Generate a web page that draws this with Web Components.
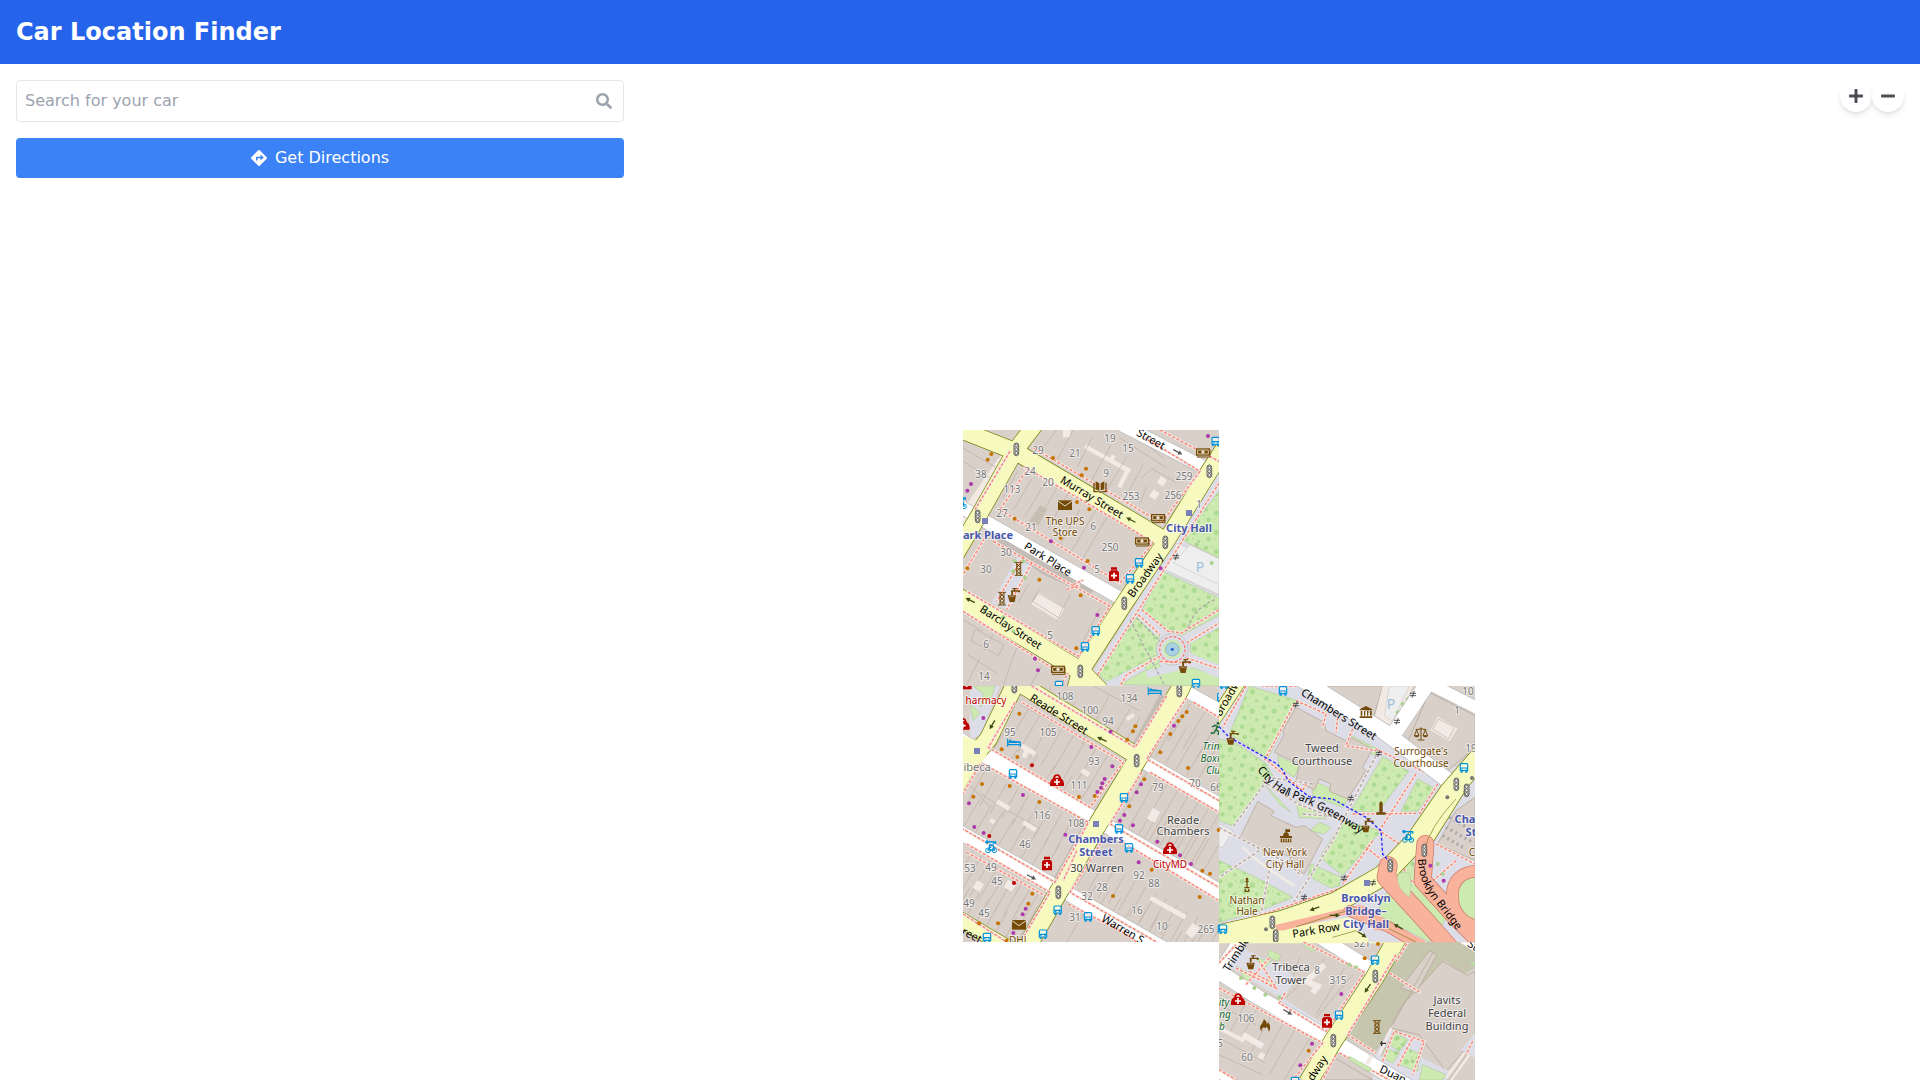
<!DOCTYPE html>
<html lang="en">
<head>
<meta charset="utf-8">
<meta name="viewport" content="width=device-width, initial-scale=1">
<title>Car Location Finder</title>
<style>
  html, body { margin: 0; height: 100%; }
  body { font: 16px/24px "DejaVu Sans", sans-serif; color: #000; background: #fff; }
</style>
</head>
<body>
<car-finder-app>
  <span slot="title">Car Location Finder</span>
  <search-panel slot="panel"></search-panel>
  <map-view slot="map"></map-view>
</car-finder-app>
<script>
const FA = {
  search: [512, 'M505 442.7L405.3 343c-4.5-4.5-10.6-7-17-7H372c27.6-35.3 44-79.7 44-128C416 93.1 322.9 0 208 0S0 93.1 0 208s93.1 208 208 208c48.3 0 92.7-16.4 128-44v16.3c0 6.4 2.5 12.5 7 17l99.7 99.7c9.4 9.4 24.6 9.4 33.9 0l28.3-28.3c9.4-9.4 9.4-24.6.1-34zM208 336c-70.7 0-128-57.2-128-128 0-70.7 57.2-128 128-128 70.7 0 128 57.2 128 128 0 70.7-57.2 128-128 128z'],
  directions: [512, 'M502.61 233.32L278.68 9.39c-12.52-12.52-32.83-12.52-45.36 0L9.39 233.32c-12.52 12.53-12.52 32.83 0 45.36l223.93 223.93c12.52 12.53 32.83 12.53 45.36 0l223.93-223.93c12.52-12.53 12.52-32.83 0-45.36zm-100.98 12.56l-84.21 77.73c-5.12 4.73-13.43 1.1-13.43-5.88V264h-96v64c0 4.42-3.58 8-8 8h-32c-4.42 0-8-3.58-8-8v-80c0-17.67 14.33-32 32-32h112v-53.73c0-6.97 8.3-10.61 13.43-5.88l84.21 77.73c3.43 3.17 3.43 8.59 0 11.76z'],
  plus: [448, 'M416 208H272V64c0-17.67-14.33-32-32-32h-32c-17.67 0-32 14.33-32 32v144H32c-17.67 0-32 14.33-32 32v32c0 17.67 14.33 32 32 32h144v144c0 17.67 14.33 32 32 32h32c17.67 0 32-14.33 32-32V304h144c17.67 0 32-14.33 32-32v-32c0-17.67-14.33-32-32-32z'],
  minus: [448, 'M416 208H32c-17.67 0-32 14.33-32 32v32c0 17.67 14.33 32 32 32h384c17.67 0 32-14.33 32-32v-32c0-17.67-14.33-32-32-32z']
};

customElements.define('fa-icon', class extends HTMLElement {
  connectedCallback() {
    const [w, d] = FA[this.getAttribute('name')];
    this.attachShadow({ mode: 'open' }).innerHTML = `
      <style>:host{display:inline-block;height:16px;line-height:0}svg{height:16px;display:block;fill:currentColor}</style>
      <svg viewBox="0 0 ${w} 512" width="${w / 32}" height="16" aria-hidden="true"><path d="${d}"/></svg>`;
  }
});

customElements.define('car-finder-app', class extends HTMLElement {
  connectedCallback() {
    this.attachShadow({ mode: 'open' }).innerHTML = `
      <style>
        :host{display:flex;flex-direction:column;height:100vh}
        header{background:#2563eb;color:#fff;padding:16px}
        h1{margin:0;font-size:24px;line-height:32px;font-weight:700}
        main{display:grid;grid-template-columns:minmax(0,1fr) minmax(0,2fr);grid-template-rows:minmax(0,1fr);flex:1;min-height:0}
        aside{padding:16px}
        section{display:flex}
      </style>
      <header><h1><slot name="title"></slot></h1></header>
      <main><aside><slot name="panel"></slot></aside><section><slot name="map"></slot></section></main>`;
  }
});

customElements.define('search-panel', class extends HTMLElement {
  connectedCallback() {
    this.attachShadow({ mode: 'open' }).innerHTML = `
      <style>
        :host{display:flex;flex-direction:column;gap:16px}
        label{display:flex;align-items:center;border:1px solid #e5e7eb;border-radius:4px;padding:8px;color:#9ca3af}
        input{flex:1;min-width:0;border:0;padding:0;margin:0;outline:0;background:none;font:inherit;height:24px;color:#000}
        input::placeholder{color:#9ca3af;opacity:1}
        label fa-icon{margin:0 3px}
        button{display:flex;justify-content:center;align-items:center;gap:8px;border:0;border-radius:4px;padding:8px 16px;background:#3b82f6;color:#fff;font:inherit;cursor:pointer}
      </style>
      <label><input type="text" placeholder="Search for your car" aria-label="Search for your car"><fa-icon name="search"></fa-icon></label>
      <button type="button"><fa-icon name="directions"></fa-icon><span>Get Directions</span></button>`;
  }
});

customElements.define('map-view', class extends HTMLElement {
  connectedCallback() {
    this.attachShadow({ mode: 'open' }).innerHTML = `
      <style>
        :host{display:block;flex:1;position:relative;overflow:hidden}
        .pane{position:absolute;left:calc(50% - 317px);top:366px;display:grid;grid-template-columns:256px 256px;grid-auto-rows:256px}
        .a{grid-area:1/1}.b{grid-area:2/1}.c{grid-area:2/2}.d{grid-area:3/2}
        .controls{position:absolute;top:16px;right:16px;display:flex}
        button{width:32px;height:32px;padding:0;border:0;border-radius:16px;background:#fff;color:#4b4f55;display:flex;align-items:center;justify-content:center;box-shadow:0 4px 6px -1px rgba(0,0,0,.1),0 2px 4px -1px rgba(0,0,0,.06);cursor:pointer}
      </style>
      <div class="pane">
        <map-tile class="a" name="cityHall"></map-tile><map-tile class="b" name="chambers"></map-tile>
        <map-tile class="c" name="park"></map-tile><map-tile class="d" name="federal"></map-tile>
      </div>
      <div class="controls">
        <button type="button" aria-label="Zoom in"><fa-icon name="plus"></fa-icon></button>
        <button type="button" aria-label="Zoom out"><fa-icon name="minus"></fa-icon></button>
      </div>`;
  }
});

/* ---- Map drawing helpers. Geometry is on a 3-units-per-pixel grid. ---- */
const P = (cls, d, w) => `<path class="${cls}" d="${d}"${w ? ` stroke-width="${w}"` : ''}/>`;
const roads = (kind, list) =>
  list.map(([d, w]) => P(kind + 'c', d, w + 4)).join('') + list.map(([d, w]) => P(kind, d, w)).join('');
const foot = (...ds) => ds.map(d => P('fw', d)).join('') + ds.map(d => P('ff', d)).join('');
const grey = (...ds) => ds.map(d => P('fw', d)).join('') + ds.map(d => P('fg', d)).join('');
const poly = (cls, ...ds) => ds.map(d => `<polygon class="${cls}" points="${d}"/>`).join('');
const lots = (x1, y1, x2, y2, n, dx, dy) => {
  let d = '';
  for (let i = 0; i < n; i++) {
    const t = n > 1 ? i / (n - 1) : 0, x = x1 + (x2 - x1) * t, y = y1 + (y2 - y1) * t;
    d += `M${x.toFixed(1)} ${y.toFixed(1)}l${dx} ${dy}`;
  }
  return P('lot', d);
};
const dots = (c, ...xy) => {
  let s = '';
  for (let i = 0; i < xy.length; i += 2) s += `<circle cx="${xy[i]}" cy="${xy[i + 1]}" r="6" fill="${c}"/>`;
  return s;
};
const ORANGE = '#c77400', PURPLE = '#ac39ac', RED = '#bf0000';
const BR = '#734a08', BL = '#0092da';
const ICON = {
  sig: '<rect x="-7" y="-19" width="14" height="38" rx="7" fill="#f4f4ee" stroke="#444" stroke-width="2.500"/><g fill="none" stroke="#444" stroke-width="2.500"><circle cy="-11" r="4.500"/><circle r="4.500"/><circle cy="11" r="4.500"/></g>',
  bus: `<path fill="#fff" fill-opacity=".6" stroke="${BL}" stroke-width="3.500" d="M-8-12H8Q11-12 11-9V9H-11V-9Q-11-12-8-12ZM-11 1H11"/><path fill="${BL}" d="M-10 8h6v7h-6zM4 8h6v7H4zM-8 3h4v3h-4zM4 3h4v3H4z"/>`,
  cash: `<rect x="-21" y="-13" width="42" height="22" fill="${BR}"/><path d="M-16-8H16V4H-16Z" fill="none" stroke="#eee3d0" stroke-width="2.500"/><circle cy="-2" r="5" fill="#eee3d0"/><path d="M-18 13H21V-8" fill="none" stroke="${BR}" stroke-width="3"/>`,
  mail: `<path fill="${BR}" d="M-21-14H21V15H-21Z"/><path d="M-21-12L0 3 21-12" fill="none" stroke="#e8dccd" stroke-width="3"/>`,
  book: `<path fill="${BR}" d="M-20-13h4v24l16 3 16-3v-24h4v29H3l-3 2-3-2H-20ZM-13-17L-2-11V10L-13 7ZM13-17L2-11V10L13 7Z"/>`,
  rx: `<path fill="${RED}" d="M-9-21H9v7H-9ZM-8-12H8Q15-10 15-4V20H-15V-4Q-15-10-8-12Z"/><path d="M0-5V13M-9 4H9" stroke="#fff" stroke-width="5"/>`,
  doc: `<path fill="${RED}" d="M-12-6Q-10-18 0-18T12-6Q20-2 21 9V17H-21V9Q-20-2-12-6Z"/><path d="M-6-8Q-4-13 0-13T6-8Z" fill="#fff"/><path d="M0-4V14M-9 5H9" stroke="#fff" stroke-width="5"/>`,
  drink: `<path fill="${BR}" d="M-14 0H11L7 20H-8ZM-4-15H4v-4H0v-3H14v3H9v4h14v6H17v-2H2V-1H-3Z"/><path d="M-9 4H6" stroke="#c8b797" stroke-width="2"/>`,
  glass: `<path fill="none" stroke="${BR}" stroke-width="3" d="M-12-19H12M-12 19H12M-6-18V18M6-18V18M-6-16L6-5-6 6 6 17M6-16L-6-5 6 6-6 17"/>`,
  sq: '<rect x="-9" y="-9" width="18" height="18" fill="#7981b8"/>',
  bed: `<path fill="none" stroke="${BL}" stroke-width="3.500" d="M-19-12V12M-19 6H19M19 12V-2L-10-5M-19-1H19"/><circle cx="-12" cy="-5" r="4" fill="${BL}"/>`,
  bike: `<path fill="none" stroke="${BL}" stroke-width="4" d="M-16-12H16M8-12v6M14-12v6M-4-3H6L10 12H-6ZM-10 12L0 2"/><g fill="none" stroke="${BL}" stroke-width="3"><circle cx="-9" cy="13" r="7"/><circle cx="10" cy="13" r="7"/><circle cx="-12" cy="-12" r="4"/></g>`,
  gate: '<path d="M-9-3H9M-9 4H9M-3 10L4-10" stroke="#333" stroke-width="2.500"/>',
  museum: `<path fill="${BR}" d="M-19-8L0-18 19-8V-5H-19ZM-16-3h5v14h-5zM-6-3h4v14h-4zM3-3h4v14H3zM12-3h5v14h-5zM-19 13H19v5H-19Z"/>`,
  scales: `<path fill="none" stroke="${BR}" stroke-width="3" d="M0-20V17M-10 18H10M-16-13Q0-18 16-13M-13-12L-20 5H-6ZM13-12L6 5H20Z"/><path fill="${BR}" d="M-21 5H-5Q-13 15-21 5ZM5 5H21Q13 15 5 5Z"/>`,
  hall: `<path fill="${BR}" d="M-18-2H-9Q-8-12 0-13T9-2H18V4H-18ZM-16 6H16V17H-16ZM-2-22H12v8H1v3H-2Z"/><path d="M-10 7V15M-3 7V15M4 7V15M11 7V15" stroke="#e2d7c8" stroke-width="3"/>`,
  tower: `<path fill="${BR}" d="M0-22L5-16V12H14V19H-14V12H-5V-16Z"/>`,
  statue: `<circle cy="-17" r="4" fill="${BR}"/><path d="M0-14V8M-5-10H5M-8 9H8M-5 13V20H5V13" fill="none" stroke="${BR}" stroke-width="4"/>`,
  fire: `<path fill="${BR}" d="M-10 18Q-20 6-10-5Q-6-11-3-20Q6-13 5-4Q9-6 9-12Q21 5 11 18Q12 9 4 3Q1 10-3 5Q-12 9-10 18Z"/>`,
  run: '<circle cx="6" cy="-17" r="4" fill="#156c32"/><path d="M-12-6L-4-11 4-8 0 2 8 8 6 18M0 2L-6 12H-16M4-7L13-2" fill="none" stroke="#156c32" stroke-width="4"/>',
  arr: '<path d="M-15 0H5" stroke="#3d4b12" stroke-width="4"/><path d="M3-7L16 0 3 7Z" fill="#3d4b12"/>',
  arw: '<path d="M-15 0H5" stroke="#555" stroke-width="4"/><path d="M3-7L16 0 3 7Z" fill="#555"/>'
};
const pins = (name, ...xy) => {
  let s = '';
  for (let i = 0; i < xy.length; i += 2) s += `<g transform="translate(${xy[i]} ${xy[i + 1]})">${ICON[name]}</g>`;
  return s;
};
const arrow = (name, x, y, r) => `<g transform="translate(${x} ${y}) rotate(${r})">${ICON[name]}</g>`;

const TILES = {
  cityHall: {
    shapes: () =>
      poly('pale', '9,220 140,60 60,300 9,290') + poly('bld', '9,60 130,68 9,245') +
      P('slot', 'M375 55l135 75M450 100l12-18M506 120l-28 58', 13) + P('slot', 'M320 6v22M612 150l-12 20M590 190l-14 20', 22) +
      P('slot', 'M225 510l82 50', 42) + P('lotp', 'M218 520l18-24 80 46-16 30z') + P('lotp', 'M46 603l85 47-15 33-84-46z') +
      P('lot', 'M240 70L290 6M290 98l50-92M352 118l45-92M392 162l60-110M440 186l60-100M500 200l50-90M545 150l30-28 75 42M560 175l-20 50M9 100l80 50M510 6l100 85M480 30l140 90M9 60l110 65') +
      P('lot', 'M128 210l45-80M160 245l55-92M195 265l55-92M230 285l60-105M265 300l60-105M300 350l60-105M335 370l75-128M370 390l80-140M205 470l-30 52M240 480l-25 42M330 500l-40 80M420 540l-55 110M9 575l60 35M170 660l-40 110M100 620l-30 50M245 715l-40 70M60 690l-40 80M22 680l90 55') +
      P('pale', 'M85 275L470 482 462 497 75 298Z') + poly('court', '175,380 222,405 145,545 95,525') +
      poly('hat', '110,320 135,330 400,488 390,502 250,440 115,345') +
      poly('dk', '240,232 262,243 236,292 208,280') +
      poly('ped', '777,130 777,210 420,774 380,774 400,730') +
      poly('pale2', '650,345 777,402 777,500 615,425') + poly('lotgrey', '690,350 777,392 777,470 640,405') +
      poly('ped', '610,425 777,505 777,774 400,774 420,725') +
      poly('grass', '777,190 777,390 665,335', '608,430 777,510 777,562 665,622 625,615 545,548', '535,562 598,622 594,680 440,762 412,735', '777,600 777,712 695,692 690,645', '480,770 595,705 610,730 660,708 777,745 777,774') +
      poly('trees', '608,430 777,510 777,562 665,622 625,615 545,548', '777,190 777,390 665,335', '535,562 598,622 594,680 440,762 412,735', '777,600 777,712 695,692 690,645') +
      P('park', 'M595 615L540 560M680 640L777 585M685 685L777 722M600 690L440 774M560 740L700 705L777 740', 22) +
      `<circle cx="637" cy="664" r="48" fill="#dddde8" stroke="#bbb" stroke-width="2"/><circle cx="637" cy="664" r="29" fill="#cdebb0"/>` +
      poly('grass', '545,700 585,682 600,700 560,728') +
      foot('M777 165L400 760', 'M535 560L600 620M545 545L625 610L665 615L777 545M680 645L777 585M680 690L777 722M600 685L500 740L480 774M600 700L690 705') +
      `<circle cx="637" cy="664" r="38" class="ff"/><circle cx="637" cy="664" r="20" fill="#aad3df" stroke="#8ab4cf" stroke-width="3"/><circle cx="637" cy="664" r="5" fill="#36c"/>` +
      P('fg', 'M510 575L615 774M530 570L600 640M765 515Q700 540 680 610') +
      roads('w', [['M-5 232L75 280L485 513', 38], ['M480 -12L740 122', 38]]) +
      roads('y', [['M-5 508L360 728L420 790', 54], ['M0 5L165 70L612 335', 50], ['M240 -30L168 65L55 265L-10 375', 48], ['M345 790L361 730L493 526L616 343L748 130L800 50', 50]]) +
      P('y', 'M-5 508L360 728L420 790', 54) +
      foot('M205 120L120 245L480 465L575 350', 'M190 115L500 295L580 345', 'M220 60L605 285L720 130L555 30', 'M150 70L45 245', 'M80 320L9 440M100 340L450 535L355 685L20 490', 'M190 385L110 520M215 405L140 545', 'M9 550L290 728', 'M600 6L777 100', 'M300 774L325 735', 'M340 470l30-14M320 485l40-14') +
      dots('#a9d28f', 190, 400, 160, 430, 195, 450, 165, 400, 130, 568, 75, 548, 160, 610, 710, 350, 755, 405) +
      dots(ORANGE, 94, 78, 83, 95, 279, 90, 378, 122, 365, 142, 351, 222, 388, 244, 164, 272, 302, 330, 383, 399, 22, 421, 238, 455, 362, 502, 349, 661) +
      dots(PURPLE, 33, 168, 22, 188, 273, 340, 372, 419, 412, 561, 225, 692, 234, 727, 602, 421, 744, 24) +
      pins('sig', 169, 64, 53, 265, 748, 130, 616, 343, 493, 526, 361, 730) + pins('bus', 767, 40, 537, 404, 510, 452, 407, 608, 375, 656, 297, 772, 708, 766) + pins('bike', 2, 222) +
      pins('cash', 729, 74, 594, 271, 546, 341, 294, 726) + pins('mail', 315, 231) + pins('book', 420, 177) + pins('rx', 462, 439) +
      pins('drink', 157, 502, 670, 715) + pins('glass', 176, 423, 126, 512) + pins('sq', 75, 279, 687, 255) + pins('gate', 648, 386) +
      arrow('arr', 513, 276, 207) + arrow('arr', 31, 517, 207) + arrow('arw', 653, 72, 28),
    labels: [
      ['Murray Street', 395, 207, 'st', 31], ['Park Place', 264, 393, 'st', 32], ['Barclay Street', 153, 597, 'st', 33], ['Broadway', 554, 442, 'st', -54], ['Street', 572, 32, 'st', 29],
      ['19', 449, 29, 'no'], ['15', 505, 59, 'no'], ['29', 235, 65, 'no'], ['21', 346, 76, 'no'], ['24', 210, 130, 'no'], ['38', 63, 137, 'no'], ['20', 263, 163, 'no'], ['9', 437, 135, 'no'], ['259', 673, 145, 'no'], ['113', 155, 184, 'no'], ['253', 514, 205, 'no'], ['256', 640, 200, 'no'], ['1', 716, 227, 'no'], ['27', 127, 254, 'no'], ['21', 212, 298, 'no'], ['6', 398, 293, 'no'], ['250', 451, 357, 'no'], ['30', 138, 373, 'no'], ['30', 79, 423, 'no'], ['5', 412, 424, 'no'], ['5', 269, 622, 'no'], ['6', 79, 648, 'no'], ['14', 71, 743, 'no'],
      ['The UPS', 315, 278, 'br'], ['Store', 315, 313, 'br'], ['City Hall', 686, 299, 'sn'], ['ark Place', 85, 320, 'sn'], ['P', 720, 420, 'pk']
    ]
  },
  chambers: {
    shapes: () =>
      poly('ped', '30,6 120,6 60,155 30,165') + poly('grass', '40,6 105,6 95,40 60,70 70,30', '30,60 60,85 40,110') +
      P('lot', 'M205 6l-15 30M240 6l-22 45M275 6l-32 56M310 35l-38 65M345 55l-32 58M380 75l-42 70M405 110l-40 70M450 30l-70 130M510 75l-70 120M540 100l-65 110M400 6l140 75M180 60l70 40M9 280L90 370M60 330l180 105M50 215l120 70') +
      lots(205, 75, 445, 210, 8, -65, 110) + lots(130, 150, 390, 305, 6, -35, 55) +
      lots(75, 260, 370, 425, 10, -50, 90) + lots(60, 345, 300, 480, 8, -50, 85) + lots(40, 500, 240, 620, 9, -60, 105) + lots(30, 610, 170, 700, 6, -50, 90) +
      lots(560, 265, 777, 390, 8, -85, 150) + lots(600, 380, 777, 480, 7, -60, 105) + lots(370, 500, 777, 735, 14, -50, 88) + lots(410, 600, 777, 800, 11, -50, 85) +
      lots(650, 110, 777, 180, 5, -65, 110) + lots(690, 60, 777, 110, 3, -65, 110) + P('lot', 'M310 650L240 774M370 690L320 774M340 500L230 680') +
      P('slot', 'M185 185l40 25M200 200l-8 20M110 352l38 22M190 415l38 23M100 405l-6 12M572 642l105 58', 14) + P('slot', 'M590 378l-18 32M380 260l-8 12M708 725l-22 30M508 94l6 10M45 600l20 12M138 598l24 14', 26) +
      poly('hat', '600,30 625,45 530,200 512,190', '340,480 355,500 240,650 190,774 170,774 270,600') +
      roads('w', [['M-5 165L50 200L410 408L800 635', 44], ['M530 220L800 375', 42], ['M-10 440L300 615L640 810', 42], ['M640 0L800 90', 36]]) +
      roads('y', [['M175 -20L85 165L30 230L-20 320', 52], ['M165 -10L530 215L545 235', 50], ['M690 -50L658 20L530 230L408 430L295 625L200 790', 54], ['M-10 700L90 760L160 800', 44]]) +
      P('y', 'M9 155L50 170 90 130 80 215 9 310Z') +
      foot('M165 55L85 190L390 370L490 235L185 55', 'M215 6L525 190L620 35', 'M680 40L560 225L777 350', 'M700 55L777 100', 'M545 265L450 420L777 610', 'M570 265L777 385', 'M70 240L385 415L285 595L9 435', 'M60 240L9 330', 'M20 480L270 625L190 760', 'M20 505L255 635', 'M430 465L330 625L600 780', 'M350 500L310 590', 'M480 470L777 650', 'M9 690L140 774', 'M325 660L480 740L530 774') +
      dots(ORANGE, 178, 89, 526, 127, 519, 142, 502, 167, 655, 111, 667, 97, 680, 84, 631, 150, 601, 205, 684, 252, 125, 196, 172, 219, 404, 336, 357, 339, 66, 300, 149, 306, 40, 338, 238, 354, 553, 286, 508, 367, 575, 557, 727, 560, 750, 569, 719, 639, 459, 636, 217, 629, 205, 659, 57, 718, 114, 718, 140, 770, 776, 438) +
      dots(PURPLE, 70, 102, 452, 143, 394, 189, 457, 247, 434, 285, 427, 298, 423, 311, 412, 324, 642, 125, 543, 301, 530, 325, 493, 393, 480, 410, 519, 424, 189, 333, 27, 358, 43, 429, 71, 447, 316, 452, 592, 473, 660, 514, 693, 540, 536, 535, 197, 674, 188, 691, 160, 747) +
      dots(RED, 216, 244, 88, 456, 162, 597) +
      pins('sig', 163, 8, 658, 20, 530, 230, 295, 625) + pins('bus', 159, 269, 492, 341, 477, 434, 507, 491, 293, 678, 384, 698, 249, 750, 81, 760, 708, -4, 784, 40, 786, 735) +
      pins('bed', 162, 176, 584, 22) + pins('doc', 291, 289, 630, 493, 8, 120) + pins('rx', 261, 539, 20, -4) + pins('mail', 177, 722) + pins('bike', 93, 486) +
      pins('sq', 51, 201, 408, 420) + pins('run', 768, 135) + arrow('arr', 97, 122, 120) + arrow('arr', 426, 166, 205) + arrow('arw', 214, 579, 27),
    labels: [
      ['Reade Street', 297, 91, 'st', 32], ['Warren S', 490, 735, 'st', 30], ['reet', 35, 752, 'st', 28],
      ['108', 315, 35, 'no'], ['134', 508, 41, 'no'], ['100', 390, 79, 'no'], ['94', 444, 112, 'no'], ['95', 149, 144, 'no'], ['105', 263, 143, 'no'], ['93', 402, 230, 'no'], ['111', 357, 302, 'no'], ['116', 245, 394, 'no'], ['108', 347, 416, 'no'], ['46', 195, 479, 'no'], ['53', 31, 552, 'no'], ['49', 93, 548, 'no'], ['45', 111, 592, 'no'], ['49', 27, 658, 'no'], ['45', 73, 686, 'no'], ['79', 594, 308, 'no'], ['70', 705, 298, 'no'], ['66', 769, 308, 'no'], ['92', 538, 572, 'no'], ['88', 582, 597, 'no'], ['28', 427, 610, 'no'], ['32', 382, 635, 'no'], ['16', 531, 678, 'no'], ['31', 344, 699, 'no'], ['10', 605, 727, 'no'], ['265', 737, 735, 'no'],
      ['harmacy', 78, 47, 'rd'], ['CityMD', 630, 541, 'rd'], ['ibeca', 52, 250, 'gy'], ['Reade', 668, 408, 'bn'], ['Chambers', 668, 441, 'bn'], ['30 Warren', 410, 552, 'bn'],
      ['Chambers', 409, 464, 'sn'], ['Street', 409, 503, 'sn'], ['DHL', 177, 768, 'br'], ['Trin', 752, 187, 'gn'], ['Boxi', 750, 222, 'gn'], ['Clu', 758, 257, 'gn']
    ]
  },
  park: {
    shapes: () =>
      poly('ped', '9,6 260,6 777,280 777,774 9,774') +
      poly('grass', '100,6 245,50 155,225 40,150', '9,165 60,178 150,238 170,275 50,425 9,410',
        '185,215 250,245 235,280 190,250', '290,290 360,320 400,340 380,370 290,335', '500,218 578,262 485,385 405,380', '605,285 655,312 605,382 555,382',
        '405,155 485,195 480,215 400,180', '380,410 495,440 380,575 312,520', '285,540 375,580 370,605 345,612 275,575', '9,530 120,580 230,640 120,685 9,715', '145,300 225,385 190,360', '240,350 330,405 250,400', '310,415 345,430 325,450 282,440', '540,570 590,520 600,600 700,690 640,774 480,690', '720,620 777,560 777,774 730,740') +
      poly('trees', '100,6 245,50 155,225 40,150', '9,165 60,178 150,238 170,275 50,425 9,410', '500,218 578,262 485,385 405,380', '605,285 655,312 605,382 555,382', '380,410 495,440 380,575 312,520', '285,540 375,580 370,605 345,612 275,575', '9,530 120,580 230,640 120,685 9,715') +
      poly('bldl', '240,70 325,115 330,140 400,175 405,160 470,195 440,250 450,260 395,345 340,322 345,300 310,285 295,318 240,290 250,240 175,205 205,150 200,140', '125,352 175,382 165,395 240,430 265,425 320,465 265,570 215,545 225,520 150,490 140,500 70,465') +
      poly('bldl', '640,25 777,95 777,190 690,265 570,185', '290,6 500,6 470,110 350,50') + poly('pale', '500,6 590,6 540,130 475,105') + poly('lotgrey', '520,6 580,6 530,112 505,95') +
      P('slot', 'M655 118l58 34', 46) + P('lotp', 'M650 135l18-30 48 24-18 36z') +
      poly('bldl', '720,380 777,340 777,530 665,480') + P('hats', 'M700 400l70 40M690 430l80 45M680 455l70 40') +
      P('slot', 'M80 490Q130 540 235 605', 8) + P('slot', 'M9 440L36 455 9 480', 14) +
      P('lotgrey', 'M9 420L50 440 20 490H9Z') +
      grey('M480 215L350 470L230 660', 'M9 430L220 540L255 575', 'M130 500L9 580', 'M160 560L135 690', 'M140 290L245 360L380 410', 'M290 300L160 280L50 430', 'M260 390L380 400') +
      foot('M235 60L145 230', 'M270 6L140 6', 'M90 6L20 130', 'M480 195L700 300', 'M410 390L600 388', 'M600 270L490 440L550 480', 'M470 470L380 600M450 490L500 530L600 600', 'M9 730L160 685L380 610L480 560', 'M240 50L330 90L320 130M365 100L360 145M410 135L390 185L480 200', 'M155 230L260 320L270 300', 'M665 300L610 390', 'M660 480L777 540M720 530L640 600M560 540L590 640') +
      dots('#a9d28f', 560, 60, 575, 45, 545, 85, 590, 540, 610, 560, 665, 540, 680, 570, 650, 630, 690, 640, 560, 610, 620, 500) +
      roads('w', [['M255 -15L500 140L710 300', 46], ['M640 -10L520 170', 46], ['M620 -10L800 80', 36]]) +
      roads('y', [['M-10 115L80 -20', 36], ['M-20 760L200 710L360 655L500 575L600 470L700 325L800 210', 60], ['M720 310L620 470', 56]]) +
      P('y', 'M9 774L200 735 400 700 460 774Z') +
      P('tr', 'M180 732L430 672L480 730L500 730', 18) + P('y', 'M330 740Q400 725 430 760L450 774M250 750l120-10', 24) +
      roads('t', [['M517 545L510 580L620 700L700 790', 52], ['M628 480L620 590L720 700L790 770', 50], ['M800 560Q700 560 710 650Q720 720 800 730', 34], ['M400 680L520 730L620 790', 30]]) +
      P('t', 'M200 733L440 672 530 730 620 774', 14) + P('olv', 'M240 728L420 672M460 705L600 774M625 500Q640 430 720 345M350 760l70-20 30 20') +
      P('grass', 'M545 575Q560 555 580 570Q590 600 580 640Q540 610 545 575Z') +
      P('path', 'M9 128L40 160L165 230Q200 245 215 290L280 338L350 345L450 400L495 440L500 510L530 545') +
      dots('#777', 694, 340, 768, 282, 150, 736) + dots(PURPLE, 643, 545, 683, 590) + dots(ORANGE, 6, 438) +
      pins('sig', 721, 301, 752, 319, 625, 499, 523, 545, 169, 715, 179, 756) + pins('bus', 201, 20, 744, 251, 21, 735, 24, 0) +
      pins('gate', 240, 61, 591, 31, 543, 112, 488, 208, 404, 343, 384, 582, 471, 596, 264, 640) + pins('museum', 450, 84) + pins('scales', 615, 150) +
      pins('drink', 45, 162, 450, 425) + pins('tower', 495, 373) + pins('hall', 210, 458) + pins('statue', 93, 602) + pins('bike', 576, 455) + pins('sq', 453, 597) +
      arrow('arr', 296, 674, 160) + arrow('arr', 356, 694, 0) + arrow('arr', 547, 728, 210) + arrow('arr', 438, 751, 35) + pins('run', -2, 130),
    curves: [
      ['greenway', 'City Hall Park Greenway', 'M38 84Q52 102 68 110Q98 119 150 153'],
      ['bridge', 'Brooklyn Bridge', 'M199 173Q200 196 212 211L252 263']
    ],
    labels: [
      ['Chambers Street', 370, 90, 'st', 32], ['Park Row', 299, 737, 'st', -9], ['Broadw', 34, 42, 'st', -60],
      ['10', 757, 22, 'no'], ['1', 724, 79, 'no'], ['19', 766, 192, 'no'], ['P', 525, 64, 'pk'],
      ['Tweed', 319, 193, 'bn'], ['Courthouse', 319, 231, 'bn'], ["Surrogate's", 615, 202, 'br'], ['Courthouse', 615, 236, 'br'],
      ['New York', 208, 505, 'br'], ['City Hall', 208, 540, 'br'], ['Nathan', 93, 647, 'br'], ['Hale', 93, 682, 'br'],
      ['Brooklyn', 451, 643, 'sn'], ['Bridge–', 451, 682, 'sn'], ['City Hall', 451, 720, 'sn'], ['Cha', 748, 405, 'sn'], ['St', 765, 443, 'sn'], ['C', 768, 505, 'br']
    ]
  },
  federal: {
    shapes: () =>
      poly('khaki', '580,6 777,6 777,90 740,110 690,70 640,140 560,270 500,350 395,300 500,130') +
      poly('bldl', '680,70 755,112 777,100 777,300 690,400 610,290 520,270 560,200', '640,38 662,50 600,165 555,150') + P('bldl', 'M650 45L530 260', 24) +
      poly('ped', '200,90 60,20 30,80 200,185 240,120') +
      poly('grass', '160,35 195,52 185,70 155,55', '120,60 165,70 140,95', '60,85 110,110 95,135', '250,12 300,35 285,40', '150,120 180,135 165,150') +
      P('lot', 'M330 60L210 180M385 90L300 230M250 60l-20 60M410 110l-110 130M9 200l110 60M130 200L75 300M170 225l-65 120M205 250l-60 110M240 270l-80 140M285 295l-80 130M9 300l140 75M9 350l130 60M100 175l-60 110M340 350l-60 100') +
      P('slot', 'M325 80L270 130L305 145L290 165M80 290l60 35M130 350l14 8', 18) + P('slot', 'M9 270l75 38', 12) +
      poly('ped', '440,110 455,118 335,290 190,190 200,180 330,262', '520,270 620,310 600,350 700,400 690,426 470,426 480,340', '777,285 777,360 735,335') +
      poly('grass', '530,280 575,305 550,340 520,320', '505,330 550,345 530,375 500,360', '575,330 612,350 605,400 550,380', '620,380 690,410 680,426 610,426', '755,65 777,75 777,85') + poly('trees', '530,280 575,305 550,340 520,320', '575,330 612,350 605,400 550,380') +
      P('slot', 'M525 270L490 350M760 350L705 426M745 345L690 420', 8) + P('lot', 'M520 270L480 345M535 275L495 355M755 345L700 426') +
      poly('bldl', '340,350 470,426 320,426') +
      roads('w', [['M-10 90L130 180L345 305L500 400L600 460', 44], ['M300 -10L460 90', 40], ['M-10 130L80 -10', 34], ['M-20 390L80 450', 26], ['M740 0L800 40', 30]]) +
      roads('y', [['M555 -20L478 115L352 308L275 435', 54]]) + P('y', 'M9 6H540L520 16H9Z') + P('t', 'M490 8H777', 10) +
      foot('M440 110L330 280L190 195L210 160', 'M540 50L395 290L480 345', 'M580 6L540 70M520 105L615 165', 'M9 150L320 315L230 426', 'M370 345L520 426M360 350L320 426', 'M250 6L450 105', 'M9 75L60 20M60 90L180 150L130 70M90 140L160 60M100 100L160 130', 'M500 370L535 280L625 310L590 410M545 385L590 300M770 310L750 350', 'M9 395L60 426') +
      dots('#a9d28f', 400, 80, 420, 88, 75, 120, 115, 150, 148, 170, 190, 178, 55, 5, 545, 300, 560, 320, 590, 370, 540, 345) +
      P('slot', 'M455 362l10 6', 30) + P('grass', 'M400 355L465 390 460 402 400 366Z') +
      dots(PURPLE, 376, 168, 288, 317, 253, 382) + dots(ORANGE, 486, 18, 446, 61, 278, 338) +
      pins('sig', 478, 115, 352, 308, 178, -8) + pins('bus', 477, 66, 369, 231, 237, 430) + pins('doc', 66, 184) + pins('rx', 333, 249) +
      pins('drink', 105, 74) + pins('fire', 147, 263) + pins('glass', 483, 267) + arrow('arr', 455, 151, 125) + arrow('arw', 215, 222, 30) +
      P('blk', 'M492 316H510M497 310V324'),
    labels: [
      ['Duan', 532, 408, 'st', 25], ['dway', 302, 390, 'st', -57], ['Trimble', 60, 48, 'st', -57], ['St', 770, 22, 'st', 32],
      ['8', 303, 95, 'no'], ['315', 366, 125, 'no'], ['321', 438, 14, 'no'], ['106', 90, 241, 'no'], ['60', 93, 358, 'no'], ['5', 12, 315, 'no'],
      ['Tribeca', 226, 88, 'bn'], ['Tower', 226, 126, 'bn'], ['Javits', 693, 187, 'bn'], ['Federal', 693, 226, 'bn'], ['Building', 693, 265, 'bn'],
      ['ity', 24, 192, 'gn'], ['ng', 27, 228, 'gn'], ['b', 18, 265, 'gn']
    ]
  }
};

customElements.define('map-tile', class extends HTMLElement {
  connectedCallback() {
    const tile = TILES[this.getAttribute('name')];
    const text = tile.labels.map(([s, x, y, cls, rot = 0]) => {
      const px = Math.round((x - 9) / 3), py = Math.round((y - this.top) / 3);
      return `<text class="${cls}" transform="translate(${px} ${py}) rotate(${rot})" y="4">${s}</text>`;
    }).join('');
    const curved = (tile.curves || []).map(([id, s, d]) =>
      `<path id="${id}" d="${d}" fill="none"/><text class="st along"><textPath href="#${id}">${s}</textPath></text>`).join('');
    this.attachShadow({ mode: 'open' }).innerHTML = `
      <style>
        :host{display:block;width:256px;height:256px;background:#d9d0c9;overflow:hidden}
        svg{display:block;width:256px;height:256px;overflow:hidden}
        .pale,.pale2{fill:#f2e9e3}.pale2,.lotgrey{fill:#eee;stroke:#ccc;stroke-width:2}
        .bld,.bldl{fill:#d9d0c9}.bldl{stroke:#b9a99c;stroke-width:2.5}
        .dk{fill:#c8bdb1}.khaki{fill:#c6c6ae}.court{fill:#dddde8}.ped{fill:#dddde8}
        .park{fill:none;stroke:#dddde8}
        .hat{fill:#c4bcb5}.hats{fill:none;stroke:#aaa;stroke-width:10;stroke-dasharray:6 10}
        .grass{fill:#cdebb0;stroke:#b3c9a0;stroke-width:2}.trees{fill:url(#tree)}
        .lot,.lotp{fill:none;stroke:#bdaea2;stroke-width:2}
        .slot{fill:none;stroke:#f2ebe5}
        .w,.wc,.y,.yc,.t,.tc{fill:none;stroke-linejoin:round}
        .w{stroke:#fff}.wc{stroke:#bbb}.y{stroke:#f7fabf}.yc{stroke:#707d05}.t{stroke:#f9b29c;stroke-linecap:round}.tc{stroke:#c97561;stroke-linecap:round}
        path.y:not([stroke-width]){fill:#f7fabf;stroke:none}
        .tr{fill:none;stroke:#f9b29c}
        .fw,.ff,.fg{fill:none;stroke:#f3e8e4;stroke-width:9}
        .ff{stroke:#fa8072;stroke-width:4;stroke-dasharray:9 5}
        .fg{stroke:#aaa;stroke-width:4;stroke-dasharray:10 6}
        .path{fill:none;stroke:#2323ff;stroke-width:4;stroke-dasharray:9 6}
        .olv{fill:none;stroke:#7b7a1c;stroke-width:2}.blk{fill:none;stroke:#333;stroke-width:4}
        text{font:10px "Noto Sans",sans-serif;text-anchor:middle;paint-order:stroke;stroke:rgba(255,255,255,.6);stroke-width:2px;stroke-linejoin:round}
        .st{font-size:11px;fill:#000;stroke:none}.along{text-anchor:start}
        .no{fill:#777}.br{fill:#734a08}.bn{font-size:11px;fill:#444}.gy{font-size:11px;fill:#777}
        .rd{fill:#bf0000}.gn{fill:#156c32;font-style:italic}
        .sn{font-size:11px;font-weight:700;fill:#4a57ac}.pk{font-size:14px;fill:#9fbfdc;stroke:none}
      </style>
      <svg viewBox="0 0 256 256" role="img" aria-label="Street map">
        <defs><pattern id="tree" width="66" height="58" patternUnits="userSpaceOnUse"><g fill="#aedb93"><circle cx="12" cy="12" r="7"/><circle cx="43" cy="23" r="8"/><circle cx="20" cy="43" r="7"/><circle cx="56" cy="50" r="5"/></g><g fill="#93bd7b"><circle cx="30" cy="8" r="1.500"/><circle cx="60" cy="10" r="1.500"/><circle cx="5" cy="30" r="1.500"/><circle cx="38" cy="42" r="1.500"/></g></pattern></defs>
        <g transform="scale(.333333) translate(-9 ${-this.top})">${tile.shapes()}</g>
        ${text}${curved}
      </svg>`;
  }
  get top() { return this.getAttribute('name') === 'federal' ? 12 : 6; }
});
</script>
</body>
</html>
